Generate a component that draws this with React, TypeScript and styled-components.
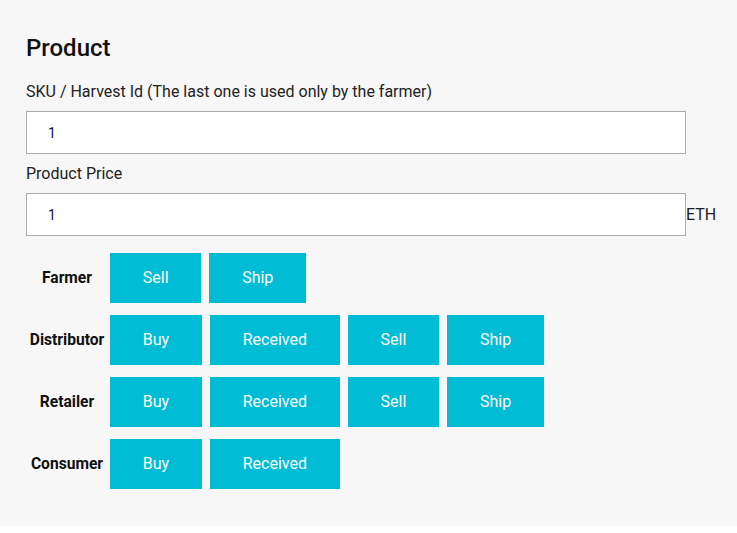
import React from "react";
import styled, { createGlobalStyle } from "styled-components";

const Global = createGlobalStyle`
  html, body { margin: 0; padding: 0; background: #ffffff; }
  body { font-family: Roboto, "Liberation Sans", Arial, sans-serif; color: #111; }
`;

const Panel = styled.section`
  background: #f7f7f7;
  padding: 30px 26px 37px 26px;
`;

const Title = styled.h2`
  margin: 0 0 16px 0;
  font-size: 24px;
  font-weight: 500;
  line-height: 36px;
  color: #111;
`;

const Label = styled.div`
  font-size: 16px;
  line-height: 20px;
  color: #222;
  margin-bottom: 9px;
`;

const FieldRow = styled.div`
  display: flex;
  align-items: center;
  margin-bottom: 10px;
`;

const Input = styled.input`
  box-sizing: border-box;
  flex: 0 0 660px;
  width: 660px;
  height: 43px;
  border: 1px solid #aaaaaa;
  background: #ffffff;
  padding: 0 21px;
  font-family: Roboto, "Liberation Sans", Arial, sans-serif;
  font-size: 14px;
  color: #101050;
  outline: none;
`;

const Unit = styled.span`
  font-size: 16px;
  color: #222;
`;

const ActionGrid = styled.div`
  display: grid;
  grid-template-columns: 82px auto;
  column-gap: 2px;
  row-gap: 12px;
  margin-top: 17px;
`;

const Role = styled.div`
  display: flex;
  align-items: center;
  justify-content: center;
  font-size: 15.6px;
  font-weight: 700;
  color: #111;
  white-space: nowrap;
  padding-bottom: 1px;
`;

const Buttons = styled.div`
  display: flex;
  gap: 8px;
`;

const Action = styled.button`
  height: 50px;
  padding: 0 32.8px 1px;
  border: none;
  background: #00bcd4;
  color: #ffffff;
  font-family: Roboto, "Liberation Sans", Arial, sans-serif;
  font-size: 16px;
  cursor: pointer;
`;

const roles: { name: string; actions: string[] }[] = [
  { name: "Farmer", actions: ["Sell", "Ship"] },
  { name: "Distributor", actions: ["Buy", "Received", "Sell", "Ship"] },
  { name: "Retailer", actions: ["Buy", "Received", "Sell", "Ship"] },
  { name: "Consumer", actions: ["Buy", "Received"] },
];

export default function App() {
  return (
    <>
      <Global />
      <Panel>
        <Title>Product</Title>
        <Label>SKU / Harvest Id (The last one is used only by the farmer)</Label>
        <FieldRow>
          <Input defaultValue="1" />
        </FieldRow>
        <Label>Product Price</Label>
        <FieldRow>
          <Input defaultValue="1" />
          <Unit>ETH</Unit>
        </FieldRow>
        <ActionGrid>
          {roles.map((r) => (
            <React.Fragment key={r.name}>
              <Role>{r.name}</Role>
              <Buttons>
                {r.actions.map((a) => (
                  <Action key={a}>{a}</Action>
                ))}
              </Buttons>
            </React.Fragment>
          ))}
        </ActionGrid>
      </Panel>
    </>
  );
}
